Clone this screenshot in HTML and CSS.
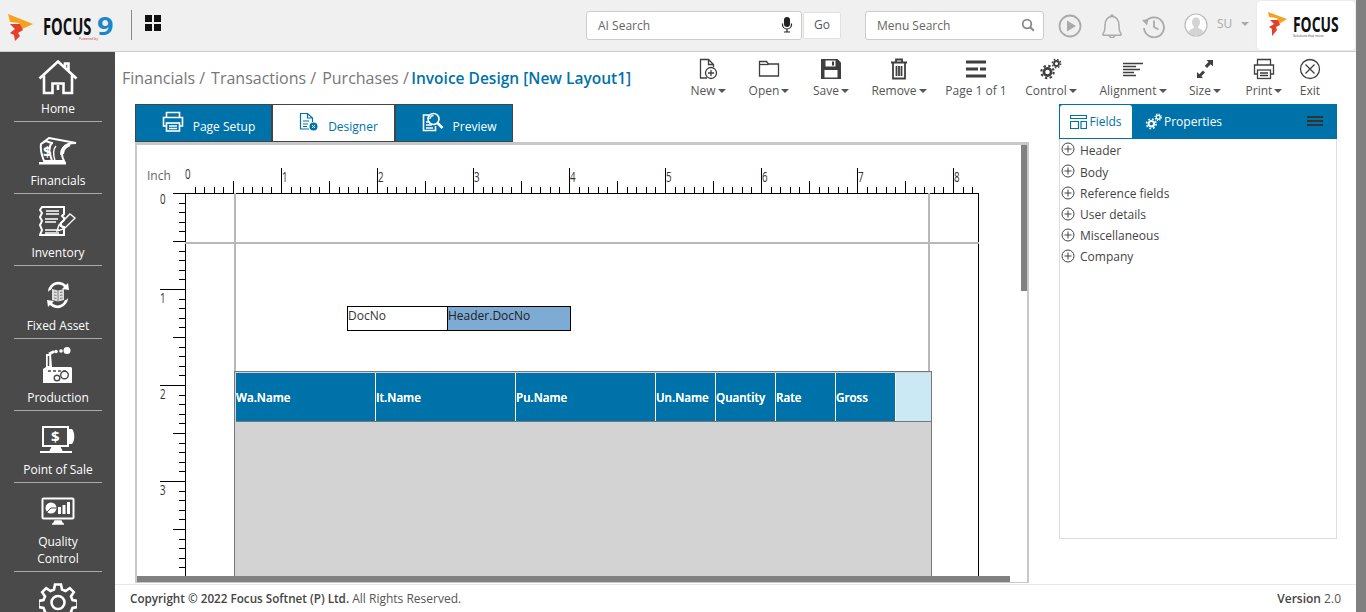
FILE: index.html
```html
<!DOCTYPE html>
<html lang="en">
<head>
<meta charset="utf-8">
<title>Invoice Design</title>
<link rel="stylesheet" href="styles.css">
</head>
<body>
<div class="app">
  <header class="topbar">
    <svg class="brand" width="120" height="40" viewBox="0 0 120 40">
      <polygon class="fl-o" points="8,8 33,18 22,23 19,17 10,16"/>
      <polygon class="fl-r" points="10,18 20,18 23,24 18,27 20,30 15,35 14,29 10,27 15,23"/>
      <text class="brand-t" transform="translate(43 29) scale(.64 1)">FOCUS</text>
      <text class="brand-9" transform="translate(97 29) scale(1.150 1)">9</text>
      <text class="brand-s" x="79" y="34">Powered by</text>
    </svg>
    <span class="vsep"></span>
    <span class="grid4"><i></i><i></i><i></i><i></i></span>
    <div class="search ai">
      <span>AI Search</span>
      <svg width="12" height="16" viewBox="0 0 12 16"><rect x="3" y="0" width="6" height="10" rx="3" fill="#222"/><path d="M1.500 6.500v1a4.500 4.500 0 0 0 9 0v-1M6 12v2.500M3 15h6" fill="none" stroke="#222" stroke-width="1.200"/></svg>
    </div>
    <span class="go">Go</span>
    <div class="search menu">
      <span>Menu Search</span>
      <svg width="14" height="14" viewBox="0 0 14 14"><circle cx="6" cy="6" r="4.300" fill="none" stroke="#888" stroke-width="1.800"/><path d="M9.200 9.200l3.600 3.600" stroke="#888" stroke-width="2"/></svg>
    </div>
    <svg class="tico t1" width="24" height="24" viewBox="0 0 24 24"><circle cx="12" cy="12" r="10.500" fill="none" stroke="#aaa" stroke-width="1.800"/><polygon points="9,6.500 18,12 9,17.500" fill="#aaa"/></svg>
    <svg class="tico t2" width="22" height="24" viewBox="2.500 2.500 17 19"><path d="M4 18c1.500-2 1.500-4 1.500-7 0-4 2.500-6.500 5.500-6.500s5.500 2.500 5.500 6.500c0 3 0 5 1.500 7 .8 1-.2 1.300-1 1.300H5c-.8 0-1.800-.3-1-1.300z" fill="none" stroke="#aaa" stroke-width="1.200"/><path d="M9 20a2.200 2.200 0 0 0 4 0M10 4.200a1 1 0 1 1 2 0" fill="none" stroke="#aaa" stroke-width="1.100"/></svg>
    <svg class="tico t3" width="24" height="24" viewBox="0 0 24 24"><path d="M4.500 8A10 10 0 1 1 3 14" fill="none" stroke="#aaa" stroke-width="1.800"/><polygon points="1,6 7.500,5 6,11.500" fill="#aaa"/><path d="M13 6.500V13l4.500 2.500" fill="none" stroke="#aaa" stroke-width="1.800"/></svg>
    <svg class="tico t4" width="24" height="24" viewBox="0 0 24 24"><circle cx="12" cy="12" r="11" fill="#fff" stroke="#bbb" stroke-width="1.200"/><path d="M12 4.500c-2.700 0-4 2-4 4.500 0 2 .8 3.500 1.800 4.500v1.500c-2 1-4.800 1.500-5.300 4.500a11 11 0 0 0 15 0c-.5-3-3.300-3.500-5.300-4.500v-1.500c1-1 1.800-2.500 1.800-4.500 0-2.500-1.300-4.500-4-4.500z" fill="#d4d4d4"/></svg>
    <span class="user">SU</span>
    <span class="caret user-caret"></span>
    <div class="logo-box">
      <svg width="76" height="30" viewBox="0 0 76 30">
        <polygon class="fl-o" points="0,0 19,7 11,12 9,6 1,5"/>
        <polygon class="fl-r" points="2,8 10,8 12,13 8,15 9,18 4,24 4,17 1,15 6,12"/>
        <text class="logo-t" transform="translate(25 20) scale(.66 1)">FOCUS</text>
        <text class="logo-s" x="25" y="25">Solutions that move</text>
      </svg>
    </div>
  </header>

  <div class="below">
    <nav class="sidebar">
      <a class="nav first">
        <svg width="40" height="36" viewBox="0 0 40 36"><path d="M1.500 18.500L20 1.500l18.500 17M27 7.500V3.500h3.500v7M6 15.500V33h8.500V23.500h11V33H34V15.500M20 25v5" class="nv"/></svg>
        <span>Home</span>
      </a>
      <a class="nav up1">
        <svg width="38" height="28" viewBox="0 0 38 28"><path d="M2 7L7 4C9 5 11 6 14 6M6 4L10 1l27 5c-7 0-11 2-13 5-2 4-1 9 1 13H5C3 19 1 13 2 7z" class="nv2"/><path d="M13 6c-3 3-3 7-2 11l2 7M31 8c-5 2-7 5-7 9" class="nv2"/><path d="M17 9c-3 3-3 8-1 15M27 8c-4 3-6 6-5 10" class="nv1"/><text class="nvt" x="4" y="20">$</text><rect x="0" y="25" width="27" height="2.500" fill="#fff"/></svg>
        <span>Financials</span>
      </a>
      <a class="nav up1">
        <svg width="38" height="31" viewBox="0 0 38 31"><path d="M3 1h22v7l-2 2 2 2v2l-3 3v3l3 1v8H1l2-5-2-5 2-4-2-4 2-4-2-3z" class="nv2"/><path d="M7 5h13M7 8h13M6 13h13M6 16h11M6 24h14M6 27h14" stroke="#fff" stroke-width="1.600" fill="none"/><path d="M18 25l2-6 11-11 5 4-11 11zM21 19l4 4" class="nv1"/></svg>
        <span>Inventory</span>
      </a>
      <a class="nav up2">
        <svg width="24" height="28" viewBox="0 0 24 28"><path d="M2 11C2 5 8 0 14 1c3 .5 5 2 6 3l2-2 1 7-7-1 2-2c-4-4-11-3-13 3-2 0-3 2-3 2z" fill="#fff"/><path d="M22 17c0 6-6 11-12 10-3-.5-5-2-6-3l-2 2-1-7 7 1-2 2c4 4 11 3 13-3 2 0 3-2 3-2z" fill="#fff"/><path d="M6 8l6 1.500L18 8v11l-6 1.500L6 19z" fill="#ddd"/><path d="M12 9.500v11M8 11l2.500.5M8 14l2.500.5M8 17l2.500.5M14 11.500l2.500-.5M14 14.500l2.500-.5M14 17.500l2.500-.5" stroke="#666" stroke-width=".8"/></svg>
        <span>Fixed Asset</span>
      </a>
      <a class="nav dn">
        <svg width="30" height="37" viewBox="0 0 30 37"><path d="M0 36V22l3-2V7h5l1 13h19l1 1v15z" fill="#fff"/><path d="M5.500 9v10" stroke="#4a4a4a" stroke-width="1.500"/><path d="M6 7l5-2.500" stroke="#fff" stroke-width="3"/><circle cx="13" cy="4.500" r="1.800" fill="#fff"/><circle cx="18" cy="4" r="1.800" fill="#fff"/><circle cx="24" cy="3.500" r="3.500" fill="#fff"/><path d="M5 24h3M10 24h3M15 24h3M20 24h3" stroke="#4a4a4a" stroke-width="1.500"/><circle cx="14" cy="31" r="2.800" fill="#fff" stroke="#4a4a4a" stroke-width="1.400"/><circle cx="21.500" cy="28" r="3.800" fill="#fff" stroke="#4a4a4a" stroke-width="1.400"/></svg>
        <span>Production</span>
      </a>
      <a class="nav up1">
        <svg width="38" height="28" viewBox="0 0 38 28"><rect x="4" y="1" width="25" height="19" class="nv2"/><path d="M29 3h4c3 3 3 12 0 15h-4z" fill="#fff"/><path d="M13 22h8l1 2H12zM1 26h32" stroke="#fff" stroke-width="2" fill="#fff"/><text class="nvt pos" x="12" y="16">$</text></svg>
        <span>Point of Sale</span>
      </a>
      <a class="nav tall">
        <svg width="34" height="30" viewBox="0 0 34 30"><rect x="1.500" y="1.500" width="31" height="20" rx="1" class="nv2"/><circle cx="10" cy="11" r="5.500" fill="#fff"/><path d="M10 11h5.500M10 11L6 15" stroke="#4a4a4a" stroke-width="1"/><path d="M17 10h3v7h-3zM21.500 8h3v9h-3zM26 5h3v12h-3z" fill="#fff"/><path d="M14 24h6l1 2H13zM11 27h12" stroke="#fff" stroke-width="1.600" fill="#fff"/></svg>
        <span>Quality<br>Control</span>
      </a>
      <a class="nav last">
        <svg width="38" height="38" viewBox="0 0 38 38"><path d="M16 1.500h6l1 5 3.500 1.500 4.300-2.800 4 4-2.800 4.300 1.500 3.500 5 1v6l-5 1-1.500 3.500 2.800 4.300-4 4-4.300-2.800-3.500 1.500-1 5h-6l-1-5-3.500-1.500-4.300 2.800-4-4 2.800-4.300-1.500-3.500-5-1v-6l5-1 1.500-3.500-2.800-4.300 4-4 4.300 2.800 3.500-1.500z" class="nv"/><circle cx="19" cy="19.500" r="6.500" class="nv"/></svg>
      </a>
    </nav>

    <div class="content">
      <main class="work">
        <div class="title-row">
          <div class="crumbs"><span>Financials /</span><span>Transactions /</span><span>Purchases /</span><b>Invoice Design [New Layout1]</b></div>
          <div class="toolbar">
            <div class="tool">
              <svg width="20" height="22" viewBox="0 0 20 22"><path d="M9 20H2.500V1.500h8l5 5V9M10.500 1.500v5h5" class="ti"/><circle cx="13" cy="15" r="5.500" class="ti"/><path d="M13 12v6M10 15h6" class="ti"/></svg>
              <span class="lb">New<i class="caret"></i></span>
            </div>
            <div class="tool">
              <svg width="22" height="22" viewBox="0 0 22 22"><path d="M1.500 18V3.500h7l2 2.500h10v12z" class="ti"/><path d="M1.500 6.500h9" class="ti"/></svg>
              <span class="lb">Open<i class="caret"></i></span>
            </div>
            <div class="tool">
              <svg width="22" height="22" viewBox="0 0 22 22"><path d="M1 1h16.500L21 4.500V21H1z" fill="#3f3f3f"/><rect x="5.500" y="2.500" width="10" height="6" fill="#fff"/><rect x="12" y="3.500" width="2" height="4" fill="#3f3f3f"/><rect x="4.500" y="12" width="13" height="7.500" fill="#fff"/></svg>
              <span class="lb">Save<i class="caret"></i></span>
            </div>
            <div class="tool">
              <svg width="18" height="22" viewBox="0 0 18 22"><path d="M1 4.500h16M6 4V1.500h6V4" class="tb"/><path d="M3 5v15.500h12V5" class="tb"/><path d="M6.500 8v10M9 8v10M11.500 8v10" class="tb"/></svg>
              <span class="lb">Remove<i class="caret"></i></span>
            </div>
            <div class="tool">
              <svg width="20" height="22" viewBox="0 0 20 22"><path d="M0 4h20M0 11h12M14 11h6M0 18h20" stroke="#3f3f3f" stroke-width="3"/></svg>
              <span class="lb">Page 1 of 1</span>
            </div>
            <div class="tool">
              <svg width="22" height="22" viewBox="0 0 22 22"><circle cx="7.500" cy="14" r="3.600" fill="none" stroke="#3f3f3f" stroke-width="2.600"/><circle cx="7.500" cy="14" r="6.200" fill="none" stroke="#3f3f3f" stroke-width="2" stroke-dasharray="2.400 2.470"/><circle cx="16.500" cy="5.500" r="2.500" fill="none" stroke="#3f3f3f" stroke-width="1.800"/><circle cx="16.500" cy="5.500" r="4.200" fill="none" stroke="#3f3f3f" stroke-width="1.400" stroke-dasharray="1.600 1.700"/></svg>
              <span class="lb">Control<i class="caret"></i></span>
            </div>
            <div class="tool">
              <svg width="22" height="22" viewBox="0 0 22 22"><path d="M1 5.500h20M1 8.500h13M1 11.500h17M1 14.500h11M1 17.500h13" stroke="#3f3f3f" stroke-width="1.500"/></svg>
              <span class="lb">Alignment<i class="caret"></i></span>
            </div>
            <div class="tool">
              <svg width="20" height="22" viewBox="0 0 20 22"><path d="M11.500 2H18v6.500l-2.300-2.300-3.700 3.700-2.200-2.200 3.700-3.700zM8 20H2v-6l2.300 2.300 3.700-3.700 2 2-3.700 3.700z" fill="#3f3f3f"/></svg>
              <span class="lb">Size<i class="caret"></i></span>
            </div>
            <div class="tool">
              <svg width="22" height="22" viewBox="0 0 22 22"><path d="M4.500 7V1.500h13V7M4.500 16H1.500V7h19v9h-3" class="ti"/><rect x="4.500" y="12" width="13" height="8.500" class="ti"/><path d="M7 15h8M7 17.500h8" class="ti"/></svg>
              <span class="lb">Print<i class="caret"></i></span>
            </div>
            <div class="tool">
              <svg width="22" height="22" viewBox="0 0 22 22"><circle cx="11" cy="11" r="9.500" class="ti"/><path d="M6.500 6.500l9 9M15.500 6.500l-9 9" class="ti"/></svg>
              <span class="lb">Exit</span>
            </div>
          </div>
        </div>

        <div class="body-row">
          <section class="designer">
            <div class="tabs">
              <div class="tab w1">
                <svg width="22" height="22" viewBox="0 0 22 22"><path d="M4.500 6V1.500h13V6M4.500 15H1.500V6.500h19V15h-3" class="wi"/><rect x="4.500" y="12" width="13" height="8" class="wi"/><path d="M7 15h8M7 17.500h8" class="wi"/></svg>
                <span>Page Setup</span>
              </div>
              <div class="tab w2 active">
                <svg width="20" height="20" viewBox="0 0 20 20"><path d="M10 17H1.500V1.500h7l5 4.500v4M8.500 1.500V6h5M4 9h6M4 12h5M4 14.500h4" class="bi"/><circle cx="14.500" cy="14.500" r="4" fill="#0072aa"/><path d="M13 13l3 3M16 13l-3 3" stroke="#fff"/></svg>
                <span>Designer</span>
              </div>
              <div class="tab w3">
                <svg width="22" height="20" viewBox="0 0 22 20"><path d="M7 3H1.500v15.500h12V14M4 10h4M4 13h6M4 16h7" class="wi"/><circle cx="11.500" cy="7" r="5.500" class="wi"/><path d="M15.500 11l5 5" stroke="#fff" stroke-width="2.500"/><path d="M8 7a3.500 3.500 0 0 1 3.500-3.500" class="wi"/></svg>
                <span>Preview</span>
              </div>
            </div>
            <div class="frame">
              <svg class="ruler" width="890" height="437" viewBox="137 145 890 437">
                <defs>
                  <path id="h-in" d="M195.500 187v6M204.500 187v6M214.500 187v6M223.500 187v6M233.500 181v12M243.500 187v6M252.500 187v6M262.500 187v6M271.500 187v6M281.500 168v25"/>
                  <path id="v-in" d="M179 203.500h6M179 212.500h6M179 222.500h6M179 231.500h6M173 241.500h12M179 251.500h6M179 260.500h6M179 270.500h6M179 279.500h6M160 289.500h25"/>
                </defs>
                <g class="ticks">
                  <path d="M185.500 193v384M978.500 193v384M185 193.500h794"/>
                  <use href="#h-in"/><use href="#h-in" x="96"/><use href="#h-in" x="192"/><use href="#h-in" x="288"/><use href="#h-in" x="384"/><use href="#h-in" x="480"/><use href="#h-in" x="576"/><use href="#h-in" x="672"/>
                  <path d="M963.500 187v6M972.500 187v6"/>
                  <use href="#v-in"/><use href="#v-in" y="96"/><use href="#v-in" y="192"/><use href="#v-in" y="288"/>
                  <path d="M173 193.500h12"/>
                </g>
                <path class="guide" d="M185 243h794M235 193v178M929 193v178"/>
                <text class="rl inch" x="147" y="180">Inch</text>
                <g class="digits">
                  <text transform="translate(185 179) scale(.7 1)">0</text>
                  <text transform="translate(282 182) scale(.7 1)">1</text>
                  <text transform="translate(378 182) scale(.7 1)">2</text>
                  <text transform="translate(474 182) scale(.7 1)">3</text>
                  <text transform="translate(570 182) scale(.7 1)">4</text>
                  <text transform="translate(666 182) scale(.7 1)">5</text>
                  <text transform="translate(762 182) scale(.7 1)">6</text>
                  <text transform="translate(858 182) scale(.7 1)">7</text>
                  <text transform="translate(954 182) scale(.7 1)">8</text>
                  <text transform="translate(160 204) scale(.7 1)">0</text>
                  <text transform="translate(160 303) scale(.7 1)">1</text>
                  <text transform="translate(160 399) scale(.7 1)">2</text>
                  <text transform="translate(160 495) scale(.7 1)">3</text>
                </g>
              </svg>
              <div class="field fl1">DocNo</div>
              <div class="field fl2">Header.DocNo</div>
              <div class="grid-table">
                <div class="thead">
                  <div class="c lg">Wa.Name</div><div class="c lg">It.Name</div><div class="c lg">Pu.Name</div><div class="c">Un.Name</div><div class="c">Quantity</div><div class="c">Rate</div><div class="c">Gross</div><div class="c rest"></div>
                </div>
              </div>
              <div class="sb-v"></div>
              <div class="sb-h"></div>
            </div>
          </section>

          <aside class="panel">
            <div class="panel-head">
              <div class="ptab">
                <svg width="17" height="14" viewBox="0 0 17 14"><path d="M.5.500h16v3H.5zM.5 6.500h8v7h-8zM11 6.500h5.500v7H11z" class="bi"/></svg>
                <span>Fields</span>
              </div>
              <div class="pprop">
                <svg width="18" height="17" viewBox="0 0 22 22"><circle cx="7.500" cy="14" r="3.600" fill="none" stroke="#fff" stroke-width="2.600"/><circle cx="7.500" cy="14" r="6.200" fill="none" stroke="#fff" stroke-width="2" stroke-dasharray="2.400 2.470"/><circle cx="16.500" cy="5.500" r="2.500" fill="none" stroke="#fff" stroke-width="1.800"/><circle cx="16.500" cy="5.500" r="4.200" fill="none" stroke="#fff" stroke-width="1.400" stroke-dasharray="1.600 1.700"/></svg>
                <span>Properties</span>
              </div>
              <span class="burger"><i></i><i></i><i></i></span>
            </div>
            <ul class="tree">
              <li class="r1"><svg width="14" height="14" viewBox="0 0 14 14"><circle cx="7" cy="7" r="6" class="pl"/><path d="M7 3.500v7M3.500 7h7" class="pl"/></svg>Header</li>
              <li class="r2"><svg width="14" height="14" viewBox="0 0 14 14"><circle cx="7" cy="7" r="6" class="pl"/><path d="M7 3.500v7M3.500 7h7" class="pl"/></svg>Body</li>
              <li><svg width="14" height="14" viewBox="0 0 14 14"><circle cx="7" cy="7" r="6" class="pl"/><path d="M7 3.500v7M3.500 7h7" class="pl"/></svg>Reference fields</li>
              <li><svg width="14" height="14" viewBox="0 0 14 14"><circle cx="7" cy="7" r="6" class="pl"/><path d="M7 3.500v7M3.500 7h7" class="pl"/></svg>User details</li>
              <li><svg width="14" height="14" viewBox="0 0 14 14"><circle cx="7" cy="7" r="6" class="pl"/><path d="M7 3.500v7M3.500 7h7" class="pl"/></svg>Miscellaneous</li>
              <li><svg width="14" height="14" viewBox="0 0 14 14"><circle cx="7" cy="7" r="6" class="pl"/><path d="M7 3.500v7M3.500 7h7" class="pl"/></svg>Company</li>
            </ul>
          </aside>
        </div>
      </main>
      <footer class="footer">
        <div class="copy"><b>Copyright © 2022 Focus Softnet (P) Ltd.</b> All Rights Reserved.</div>
        <div class="ver"><b>Version</b> 2.0</div>
      </footer>
    </div>
  </div>
</div>
<div class="page-sb"></div>
</body>
</html>
```

FILE: styles.css
```css
* { box-sizing: border-box; }
html, body { margin: 0; height: 612px; overflow: hidden; }
body { display: flex; width: 1366px; font-family: "Open Sans", sans-serif; color: #555; background: #fff; }
.app { width: 1356px; height: 612px; display: flex; flex-direction: column; }
.page-sb { width: 10px; height: 612px; background: #808080; }

/* top bar */
.topbar { height: 52px; flex: none; background: #f0f0f0; border-bottom: 1px solid #ccc; display: flex; align-items: center; position: relative; }
.brand { flex: none; margin-top: 1px; }
.fl-o { fill: #f7a11f; }
.fl-r { fill: #e2402a; }
.brand-t { font: 700 23px "Open Sans", sans-serif; fill: #111; }
.brand-9 { font: 700 25px "Open Sans", sans-serif; fill: #1b87c9; }
.brand-s { font: 3.500px "Open Sans", sans-serif; fill: #c33; }
.vsep { width: 1px; height: 30px; background: #888; margin: -2px 0 0 11px; flex: none; }
.grid4 { display: grid; grid-template-columns: 7px 7px; gap: 2px; margin: -6px 0 0 13px; flex: none; }
.grid4 i { height: 7px; background: #111; }
.search { height: 29px; background: #fff; border: 1px solid #ccc; border-radius: 3px; display: flex; align-items: center; justify-content: space-between; font-size: 12px; color: #666; flex: none; margin-top: -1px; }
.search span { padding-left: 11px; }
.ai { width: 216px; margin-left: 425px; padding-right: 8px; }
.go { width: 38px; height: 27px; border: 1px solid #e0e0e0; background: #fff; border-radius: 2px; font-size: 12px; color: #555; text-align: center; line-height: 24px; margin: -1px 0 0 1px; flex: none; }
.menu { width: 179px; margin-left: 24px; padding-right: 8px; }
.tico { flex: none; }
.t1 { margin-left: 14px; }
.t2 { margin-left: 19px; }
.t3 { margin-left: 18px; }
.t4 { margin-left: 19px; margin-top: -2px; }
.user { font-size: 12px; color: #aaa; margin: -4px 0 0 9px; flex: none; }
.caret { display: inline-block; width: 0; height: 0; border: 4px solid transparent; border-top: 4px solid #555; border-bottom: 0; margin-left: 2px; vertical-align: 2px; }
.user-caret { border-top-color: #aaa; margin: -3px 0 0 9px; flex: none; }
.logo-box { position: absolute; left: 1257px; top: 1px; width: 98px; height: 49px; background: #fff; border-radius: 4px; box-shadow: 0 0 2px #ddd; padding: 11px 0 0 11px; }
.logo-t { font: 700 21px "Open Sans", sans-serif; fill: #111; }
.logo-s { font: 3.300px "Open Sans", sans-serif; fill: #444; }

.below { flex: 1; display: flex; min-height: 0; }

/* sidebar */
.sidebar { width: 115px; flex: none; background: #4a4a4a; overflow: hidden; }
.nav { display: flex; flex-direction: column; align-items: center; justify-content: flex-end; height: 72.200px; margin: 0 13px 0 14px; border-bottom: 1px solid #aaa; color: #fff; font-size: 12px; padding-bottom: 4px; line-height: 17px; text-align: center; }
.nav.first { height: 70px; }
.nav svg { flex: none; margin-bottom: 6px; }
.nav.first svg { margin-bottom: 4px; }
.nav.up1 svg { margin-bottom: 7px; }
.nav.up2 svg { margin-bottom: 8px; }
.nav.dn svg { margin-bottom: 5px; }
.nav.tall { height: 89px; }
.nav.last { border: 0; justify-content: flex-start; padding-top: 11px; height: 60px; }
.nv { fill: none; stroke: #fff; stroke-width: 2.600; }
.nv2 { fill: none; stroke: #fff; stroke-width: 2; }
.nv1 { fill: none; stroke: #fff; stroke-width: 1.400; }
.nvt { font: 700 15px "Open Sans", sans-serif; fill: #fff; }

/* work area */
.content { flex: 1; min-width: 0; display: flex; flex-direction: column; }
.work { height: 532px; flex: none; }
.title-row { height: 52px; display: flex; padding-left: 7px; }
.crumbs { font-size: 16px; color: #777; padding-top: 15px; display: flex; gap: 6px; white-space: nowrap; }
.crumbs b { color: #0072a8; font-weight: 600; font-size: 15.500px; margin-left: -3.500px; line-height: 22px; }
.toolbar { margin-left: auto; margin-right: 32px; display: grid; grid-template-columns: 56px 66px 58px 78px 76px 74px 90px 54px 64px 28px; }
.tool { display: flex; flex-direction: column; align-items: center; padding-top: 6px; white-space: nowrap; }
.tool svg { flex: none; height: 22px; }
.lb { font-size: 12px; color: #555; margin-top: 2px; line-height: 18px; }
.lb .caret { vertical-align: 2px; }
.ti { fill: none; stroke: #3f3f3f; stroke-width: 1.300; }
.tb { fill: none; stroke: #3f3f3f; stroke-width: 1.800; }
.wi { fill: none; stroke: #fff; stroke-width: 1.600; }
.bi { fill: none; stroke: #0072aa; stroke-width: 1.200; }

.body-row { display: flex; margin-left: 20px; }
.designer { width: 894px; flex: none; }
.tabs { display: flex; height: 38px; }
.tab { height: 38px; background: #0072aa; border: 1px solid #444; color: #fff; font-size: 12px; display: flex; align-items: center; justify-content: center; gap: 9px; padding-left: 10px; }
.tab span { padding-top: 6px; }
.tab svg { margin-top: -2px; flex: none; }
.w1 { width: 137px; }
.w2 { width: 123px; }
.w3 { width: 118px; }
.tab.active { background: #fff; color: #0072aa; }
.frame { position: relative; height: 441px; border: solid #c8c8c8; border-width: 3px 2px 1px 2px; overflow: hidden; background: #fff; }
.ruler { position: absolute; left: 0; top: 0; display: block; }
.ticks { fill: none; stroke: #000; stroke-width: 1; }
.guide { fill: none; stroke: #b8b8b8; stroke-width: 2; }
.rl { font: 12px "Open Sans", sans-serif; fill: #333; }
.inch { fill: #666; }
.digits text { font: 14px "Open Sans", sans-serif; fill: #333; }
.field { position: absolute; height: 25px; top: 161px; border: 1px solid #000; font-size: 12px; line-height: 17px; color: #333; white-space: nowrap; }
.fl1 { left: 210px; width: 101px; background: #fff; }
.fl2 { left: 310px; width: 124px; background: #7eabd3; color: #222; }
.grid-table { position: absolute; left: 97px; top: 226px; width: 698px; height: 211px; background: #d3d3d3; border: 1px solid #777; border-width: 1px 1px 0 1px; padding: 1px 0 0 1px; }
.thead { display: flex; height: 49px; border-bottom: 1px solid #777; }
.c { background: #0072aa; color: #fff; font-size: 11.600px; font-weight: 600; text-shadow: 0 0 .6px #fff; width: 60px; flex: none; border-right: 1px solid #fff; line-height: 50px; white-space: nowrap; }
.c.lg { width: 140px; }
.c.rest { flex: 1; background: #cbe8f5; border: 0; }
.sb-v { position: absolute; right: 0; top: 0; width: 6px; height: 146px; background: #808080; }
.sb-h { position: absolute; left: 0; bottom: 0; width: 873px; height: 6px; background: #808080; }

/* panel */
.panel { width: 278px; height: 435px; margin-left: 30px; flex: none; border: 1px solid #ddd; border-top: 0; }
.panel-head { height: 35px; margin: 0 -1px; background: #0072aa; display: flex; position: relative; padding: 1px 0 0 1px; }
.ptab { width: 72px; height: 33px; background: #fff; border-radius: 3px 3px 0 0; color: #0072aa; font-size: 12px; display: flex; align-items: center; justify-content: center; gap: 2px; }
.pprop { color: #fff; font-size: 12px; display: flex; align-items: center; gap: 1px; margin-left: 13px; height: 33px; }
.burger { position: absolute; right: 14px; top: 12px; display: grid; gap: 2px; width: 16px; }
.burger i { height: 2px; background: #333; }
.tree { list-style: none; margin: 0; padding: 0 0 0 1px; font-size: 12px; color: #444; }
.tree li { height: 21px; display: flex; align-items: center; gap: 5px; white-space: nowrap; }
.tree li.r1 { height: 22px; }
.tree li.r2 { height: 22px; }
.tree svg { flex: none; margin-top: -2px; }
.pl { fill: none; stroke: #444; stroke-width: 1; }

/* footer */
.footer { height: 28px; flex: none; border-top: 1px solid #e8e8e8; display: flex; justify-content: space-between; align-items: center; padding: 0 15px; font-size: 12px; color: #555; }
.copy b { font-size: 11.700px; }
.footer b { font-weight: 600; color: #444; }
```
